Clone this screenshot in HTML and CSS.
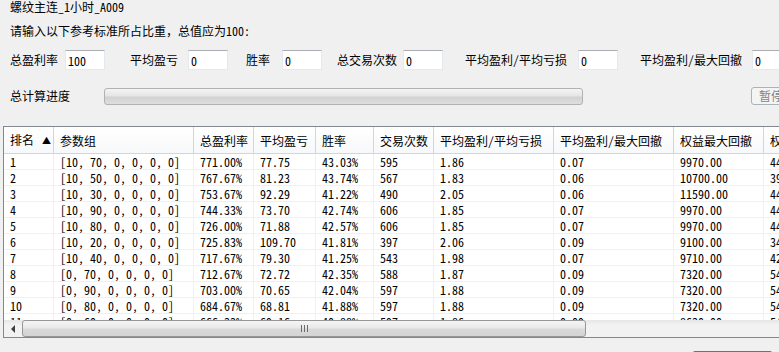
FILE: index.html
```html
<!DOCTYPE html>
<html lang="zh-CN">
<head>
    <meta charset="UTF-8">
    <meta name="viewport" content="width=device-width, initial-scale=1.0">
    <title>螺纹主连_1小时_A009</title>
    <link rel="stylesheet" href="styles.css">
</head>
<body>
    <div class="title">螺纹主连_1小时_A009</div>
    <div class="prompt">请输入以下参考标准所占比重，总值应为100:</div>

    <div class="weights">
        <label for="wProfit">总盈利率</label><input type="text" id="wProfit" value="100">
        <label for="wAvg">平均盈亏</label><input type="text" id="wAvg" value="0">
        <label for="wWin">胜率</label><input type="text" id="wWin" value="0">
        <label for="wTrades">总交易次数</label><input type="text" id="wTrades" value="0">
        <label for="wRatio">平均盈利/平均亏损</label><input type="text" id="wRatio" value="0">
        <label for="wDraw">平均盈利/最大回撤</label><input type="text" id="wDraw" value="0">
    </div>

    <div class="progress-row">
        <span class="progress-label">总计算进度</span>
        <div class="progress"></div>
        <button class="pause" disabled>暂停</button>
    </div>

    <div class="grid">
        <div class="grid-body">
            <table class="results">
                <colgroup>
                    <col class="c1"><col class="c2"><col class="c3"><col class="c4"><col class="c5">
                    <col class="c6"><col class="c7"><col class="c8"><col class="c9"><col class="c10">
                </colgroup>
                <thead>
                    <tr>
                        <th>排名 <span class="sort">▲</span></th>
                        <th>参数组</th>
                        <th>总盈利率</th>
                        <th>平均盈亏</th>
                        <th>胜率</th>
                        <th>交易次数</th>
                        <th>平均盈利/平均亏损</th>
                        <th>平均盈利/最大回撤</th>
                        <th>权益最大回撤</th>
                        <th>权益最大回撤率</th>
                    </tr>
                </thead>
                <tbody id="rows"></tbody>
            </table>
        </div>
        <div class="hscroll">
            <div class="hscroll-btn"><span class="arrow-left"></span></div>
            <div class="hscroll-thumb"><span class="grip"></span></div>
            <div class="hscroll-track"></div>
        </div>
    </div>

    <div class="footer">
        <button class="action"></button>
    </div>

    <script>
        document.addEventListener('DOMContentLoaded', function() {
            const results = [
                ['[10, 70, 0, 0, 0, 0]', '771.00%', '77.75', '43.03%', '595', '1.86', '0.07', '9970.00', '44.12%'],
                ['[10, 50, 0, 0, 0, 0]', '767.67%', '81.23', '43.74%', '567', '1.83', '0.06', '10700.00', '39.85%'],
                ['[10, 30, 0, 0, 0, 0]', '753.67%', '92.29', '41.22%', '490', '2.05', '0.06', '11590.00', '44.60%'],
                ['[10, 90, 0, 0, 0, 0]', '744.33%', '73.70', '42.74%', '606', '1.85', '0.07', '9970.00', '44.12%'],
                ['[10, 80, 0, 0, 0, 0]', '726.00%', '71.88', '42.57%', '606', '1.85', '0.07', '9970.00', '44.12%'],
                ['[10, 20, 0, 0, 0, 0]', '725.83%', '109.70', '41.81%', '397', '2.06', '0.09', '9100.00', '34.77%'],
                ['[10, 40, 0, 0, 0, 0]', '717.67%', '79.30', '41.25%', '543', '1.98', '0.07', '9710.00', '42.30%'],
                ['[0, 70, 0, 0, 0, 0]', '712.67%', '72.72', '42.35%', '588', '1.87', '0.09', '7320.00', '54.18%'],
                ['[0, 90, 0, 0, 0, 0]', '703.00%', '70.65', '42.04%', '597', '1.88', '0.09', '7320.00', '54.18%'],
                ['[0, 80, 0, 0, 0, 0]', '684.67%', '68.81', '41.88%', '597', '1.88', '0.09', '7320.00', '54.18%'],
                ['[0, 60, 0, 0, 0, 0]', '666.33%', '69.16', '40.88%', '597', '1.86', '0.09', '8630.00', '54.18%']
            ];

            const tbody = document.getElementById('rows');
            results.forEach(function(row, i) {
                const tr = document.createElement('tr');
                [String(i + 1)].concat(row).forEach(function(value) {
                    const td = document.createElement('td');
                    td.textContent = value;
                    tr.appendChild(td);
                });
                tbody.appendChild(tr);
            });
        });
    </script>
</body>
</html>
```

FILE: styles.css
```css
body {
    margin: 0;
    width: 779px;
    height: 352px;
    overflow: hidden;
    background-color: #f0f0f0;
    color: #000;
    font-family: "Noto Sans Mono CJK SC", "Noto Sans CJK SC", sans-serif;
    font-size: 12px;
}
.title {
    height: 13px;
    line-height: 13px;
    padding-left: 10px;
}
.prompt {
    margin-top: 11px;
    line-height: 14px;
    padding-left: 10px;
}
.weights {
    display: grid;
    grid-template-columns: 55px 65px 58px 58px 36px 55px 66px 62px 113px 62px 112px 40px;
    align-items: center;
    height: 20px;
    margin-top: 12px;
    padding-left: 10px;
}
.weights label {
    white-space: nowrap;
    line-height: 14px;
}
.weights input {
    box-sizing: border-box;
    width: 40px;
    height: 20px;
    padding: 0 0 0 2px;
    border: 1px solid #e3e9ef;
    border-top-color: #abadb3;
    background-color: #fff;
    font: inherit;
    line-height: 18px;
    outline: none;
}
.progress-row {
    display: flex;
    align-items: center;
    height: 20px;
    margin-top: 16px;
    padding-left: 10px;
}
.progress-label {
    flex: none;
    width: 60px;
    white-space: nowrap;
    line-height: 14px;
}
.progress {
    flex: none;
    box-sizing: border-box;
    width: 479px;
    height: 17px;
    margin-left: 34px;
    border: 1px solid #b2b2b2;
    border-radius: 3px;
    background: linear-gradient(#f4f4f4, #e6e6e6 45%, #d2d2d2 55%, #dedede);
}
.pause {
    flex: none;
    box-sizing: border-box;
    width: 40px;
    height: 18px;
    margin-left: 168px;
    padding: 0;
    border: 1px solid #adb2b5;
    border-radius: 3px;
    background-color: #f4f4f4;
    color: #838383;
    font: inherit;
    line-height: 16px;
}
.grid {
    box-sizing: border-box;
    width: 880px;
    height: 212px;
    margin: 20px 0 0 3px;
    border: 1px solid #828790;
    background-color: #fff;
}
.grid-body {
    height: 193px;
    overflow: hidden;
}
.results {
    table-layout: fixed;
    border-collapse: separate;
    border-spacing: 0;
    width: 860px;
}
.c1 { width: 50px; }
.c2 { width: 140px; }
.c3 { width: 60px; }
.c4 { width: 62px; }
.c5 { width: 58px; }
.c6 { width: 60px; }
.c7 { width: 120px; }
.c8 { width: 120px; }
.c9 { width: 90px; }
.c10 { width: 100px; }
.results th,
.results td {
    box-sizing: border-box;
    padding: 0 0 0 6px;
    text-align: left;
    white-space: nowrap;
    overflow: hidden;
    font-weight: normal;
}
.results th {
    height: 26px;
    line-height: 25px;
    border-right: 1px solid #d5d5d5;
    border-bottom: 1px solid #d5d5d5;
    background: linear-gradient(#ffffff, #f7f8fa);
}
.sort {
    font-size: 9px;
    vertical-align: 1px;
    margin-left: 2px;
}
.results td {
    height: 16px;
    line-height: 15px;
    border-right: 1px solid #f0f0f0;
    border-bottom: 1px solid #f0f0f0;
}
.hscroll {
    display: flex;
    height: 17px;
    background: linear-gradient(#e6e6e6, #f2f2f2 30%, #f2f2f2);
}
.hscroll-btn {
    display: flex;
    align-items: center;
    justify-content: center;
    width: 17px;
}
.arrow-left {
    width: 0;
    height: 0;
    border-top: 4px solid transparent;
    border-bottom: 4px solid transparent;
    border-right: 4px solid #404040;
}
.hscroll-thumb {
    box-sizing: border-box;
    display: flex;
    align-items: center;
    justify-content: center;
    width: 564px;
    margin-left: 1px;
    border: 1px solid #979797;
    border-radius: 3px;
    background: linear-gradient(#f5f5f5, #e9e9e9 45%, #d9d9d9 55%, #d4d4d4);
}
.grip {
    width: 7px;
    height: 7px;
    background: linear-gradient(90deg, #6a6a6a 1px, transparent 1px 3px, #6a6a6a 3px 4px, transparent 4px 6px, #6a6a6a 6px 7px);
}
.hscroll-track {
    flex: 1;
}
.footer {
    display: flex;
    justify-content: flex-end;
    padding: 13px 6px 0 0;
}
.action {
    box-sizing: border-box;
    width: 81px;
    height: 23px;
    padding: 0;
    border: 1px solid #707070;
    border-radius: 3px;
    background: linear-gradient(#f2f2f2, #ebebeb 45%, #dddddd 55%, #cfcfcf);
}
```
